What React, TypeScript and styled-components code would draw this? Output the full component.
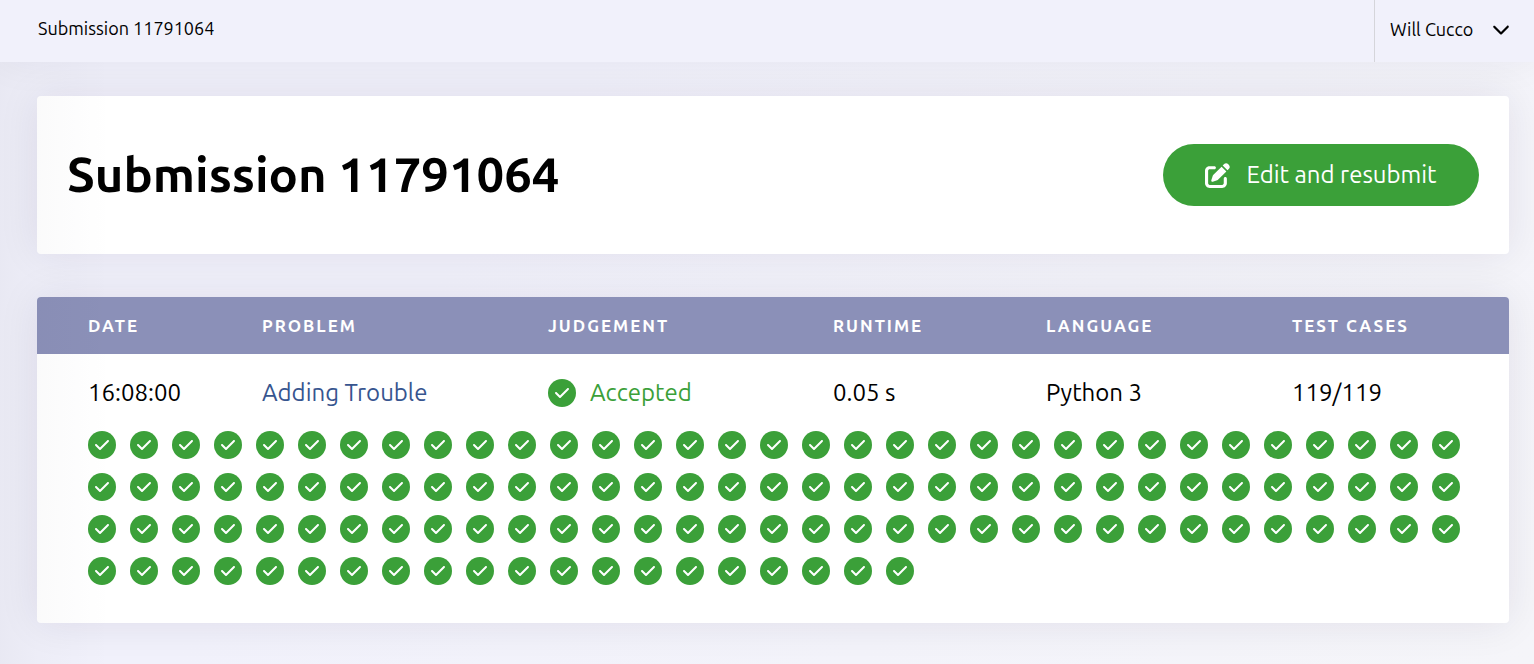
import React from "react";
import styled, { createGlobalStyle } from "styled-components";
import { FaCheck, FaChevronDown, FaPenToSquare } from "react-icons/fa6";

const GlobalStyle = createGlobalStyle`
  * { box-sizing: border-box; }
  body {
    margin: 0;
    background: #f2f2fa;
    color: #000;
    font-family: Ubuntu, "Noto Sans", "Open Sans", sans-serif;
    font-size: 24px;
    line-height: 28px;
  }
`;

const Page = styled.div`
  min-height: 100vh;
  display: flex;
  flex-direction: column;
`;

const TopBar = styled.header`
  position: relative;
  z-index: 1;
  display: flex;
  justify-content: space-between;
  height: 62px;
  padding-left: 38px;
  background: #f1f1fb;
  box-shadow: 0 0 40px rgba(30, 20, 50, 0.06);
  font-size: 18px;
`;

const Crumb = styled.span`
  padding-top: 14px;
`;

const UserMenu = styled.button`
  display: flex;
  align-items: center;
  justify-content: space-between;
  width: 160px;
  padding: 0 24px 5px 15px;
  border: 0;
  border-left: 1px solid #d5d5da;
  background: none;
  color: inherit;
  font: inherit;
  cursor: pointer;
`;

const Main = styled.main`
  position: relative;
  flex: 1;
  display: flex;
  flex-direction: column;
  gap: 43px;
  padding: 34px 25px 41px 37px;
  overflow: hidden;
  background: linear-gradient(125deg, #f1f1fb 30%, #f5f5f9);

  &::after {
    content: "";
    position: absolute;
    inset: 0 auto 0 0;
    width: 112px;
    background: linear-gradient(90deg, rgba(30, 30, 50, 0.04), rgba(30, 30, 50, 0.02) 33%, rgba(30, 30, 50, 0.01) 60%, transparent);
    pointer-events: none;
  }
`;

const Card = styled.section`
  border-radius: 4px;
  background: #fff;
  box-shadow: 0 0 40px rgba(30, 20, 50, 0.09);
`;

const TitleCard = styled(Card)`
  display: flex;
  align-items: center;
  justify-content: space-between;
  padding: 48px 30px;
`;

const Title = styled.h1`
  margin: 0;
  padding-bottom: 2px;
  font-size: 49px;
  line-height: 60px;
  font-weight: 700;
`;

const ResubmitButton = styled.button`
  display: flex;
  align-items: center;
  justify-content: center;
  gap: 16px;
  height: 62px;
  min-width: 316px;
  padding: 0 40px;
  border: 0;
  border-radius: 31px;
  background: #3ba039;
  color: #fff;
  font: inherit;
  cursor: pointer;
`;

const Table = styled.table`
  width: 100%;
  table-layout: fixed;
  border-collapse: collapse;
`;

const HeadCell = styled.th`
  height: 57px;
  padding: 0;
  background: #8b90b8;
  color: #fff;
  font-size: 17px;
  font-weight: 700;
  letter-spacing: 2px;
  text-align: left;
  text-transform: uppercase;

  &:first-child { padding-left: 51px; border-top-left-radius: 4px; }
  &:last-child { border-top-right-radius: 4px; }
`;

const Cell = styled.td`
  padding: 25px 0 24px;

  &:first-child { padding-left: 51px; }
`;

const ProblemLink = styled.a`
  color: #37558f;
  text-decoration: none;
`;

const Judgement = styled.span`
  display: flex;
  align-items: center;
  gap: 14px;
  color: #3ba039;
`;

const Dot = styled.span`
  display: flex;
  align-items: center;
  justify-content: center;
  flex: none;
  width: 28px;
  height: 28px;
  border-radius: 50%;
  background: #3ba039;
  color: #fff;
`;

const CasesCell = styled.td`
  padding: 0 48px 38px 51px;
`;

const Cases = styled.div`
  display: flex;
  flex-wrap: wrap;
  gap: 14px;
`;

const columns = [
  { label: "Date", width: 225 },
  { label: "Problem", width: 286 },
  { label: "Judgement", width: 285 },
  { label: "Runtime", width: 213 },
  { label: "Language", width: 246 },
  { label: "Test cases", width: 217 },
];

const Column = styled.col<{ $width: number }>`
  width: ${(p) => p.$width}px;
`;

const PassedMark = () => (
  <Dot>
    <FaCheck size={16} />
  </Dot>
);

const TEST_CASES = 119;

export default function App() {
  return (
    <Page>
      <GlobalStyle />
      <TopBar>
        <Crumb>Submission 11791064</Crumb>
        <UserMenu type="button">
          Will Cucco
          <FaChevronDown size={18} />
        </UserMenu>
      </TopBar>
      <Main>
        <TitleCard>
          <Title>Submission 11791064</Title>
          <ResubmitButton type="button">
            <FaPenToSquare size={25} />
            Edit and resubmit
          </ResubmitButton>
        </TitleCard>
        <Card>
          <Table>
            <colgroup>
              {columns.map((c) => (
                <Column key={c.label} $width={c.width} />
              ))}
            </colgroup>
            <thead>
              <tr>
                {columns.map((c) => (
                  <HeadCell key={c.label} scope="col">{c.label}</HeadCell>
                ))}
              </tr>
            </thead>
            <tbody>
              <tr>
                <Cell>16:08:00</Cell>
                <Cell>
                  <ProblemLink href="#problem">Adding Trouble</ProblemLink>
                </Cell>
                <Cell>
                  <Judgement>
                    <PassedMark />
                    Accepted
                  </Judgement>
                </Cell>
                <Cell>0.05 s</Cell>
                <Cell>Python 3</Cell>
                <Cell>119/119</Cell>
              </tr>
              <tr>
                <CasesCell colSpan={columns.length}>
                  <Cases>
                    {Array.from({ length: TEST_CASES }, (_, i) => (
                      <PassedMark key={i} />
                    ))}
                  </Cases>
                </CasesCell>
              </tr>
            </tbody>
          </Table>
        </Card>
      </Main>
    </Page>
  );
}
